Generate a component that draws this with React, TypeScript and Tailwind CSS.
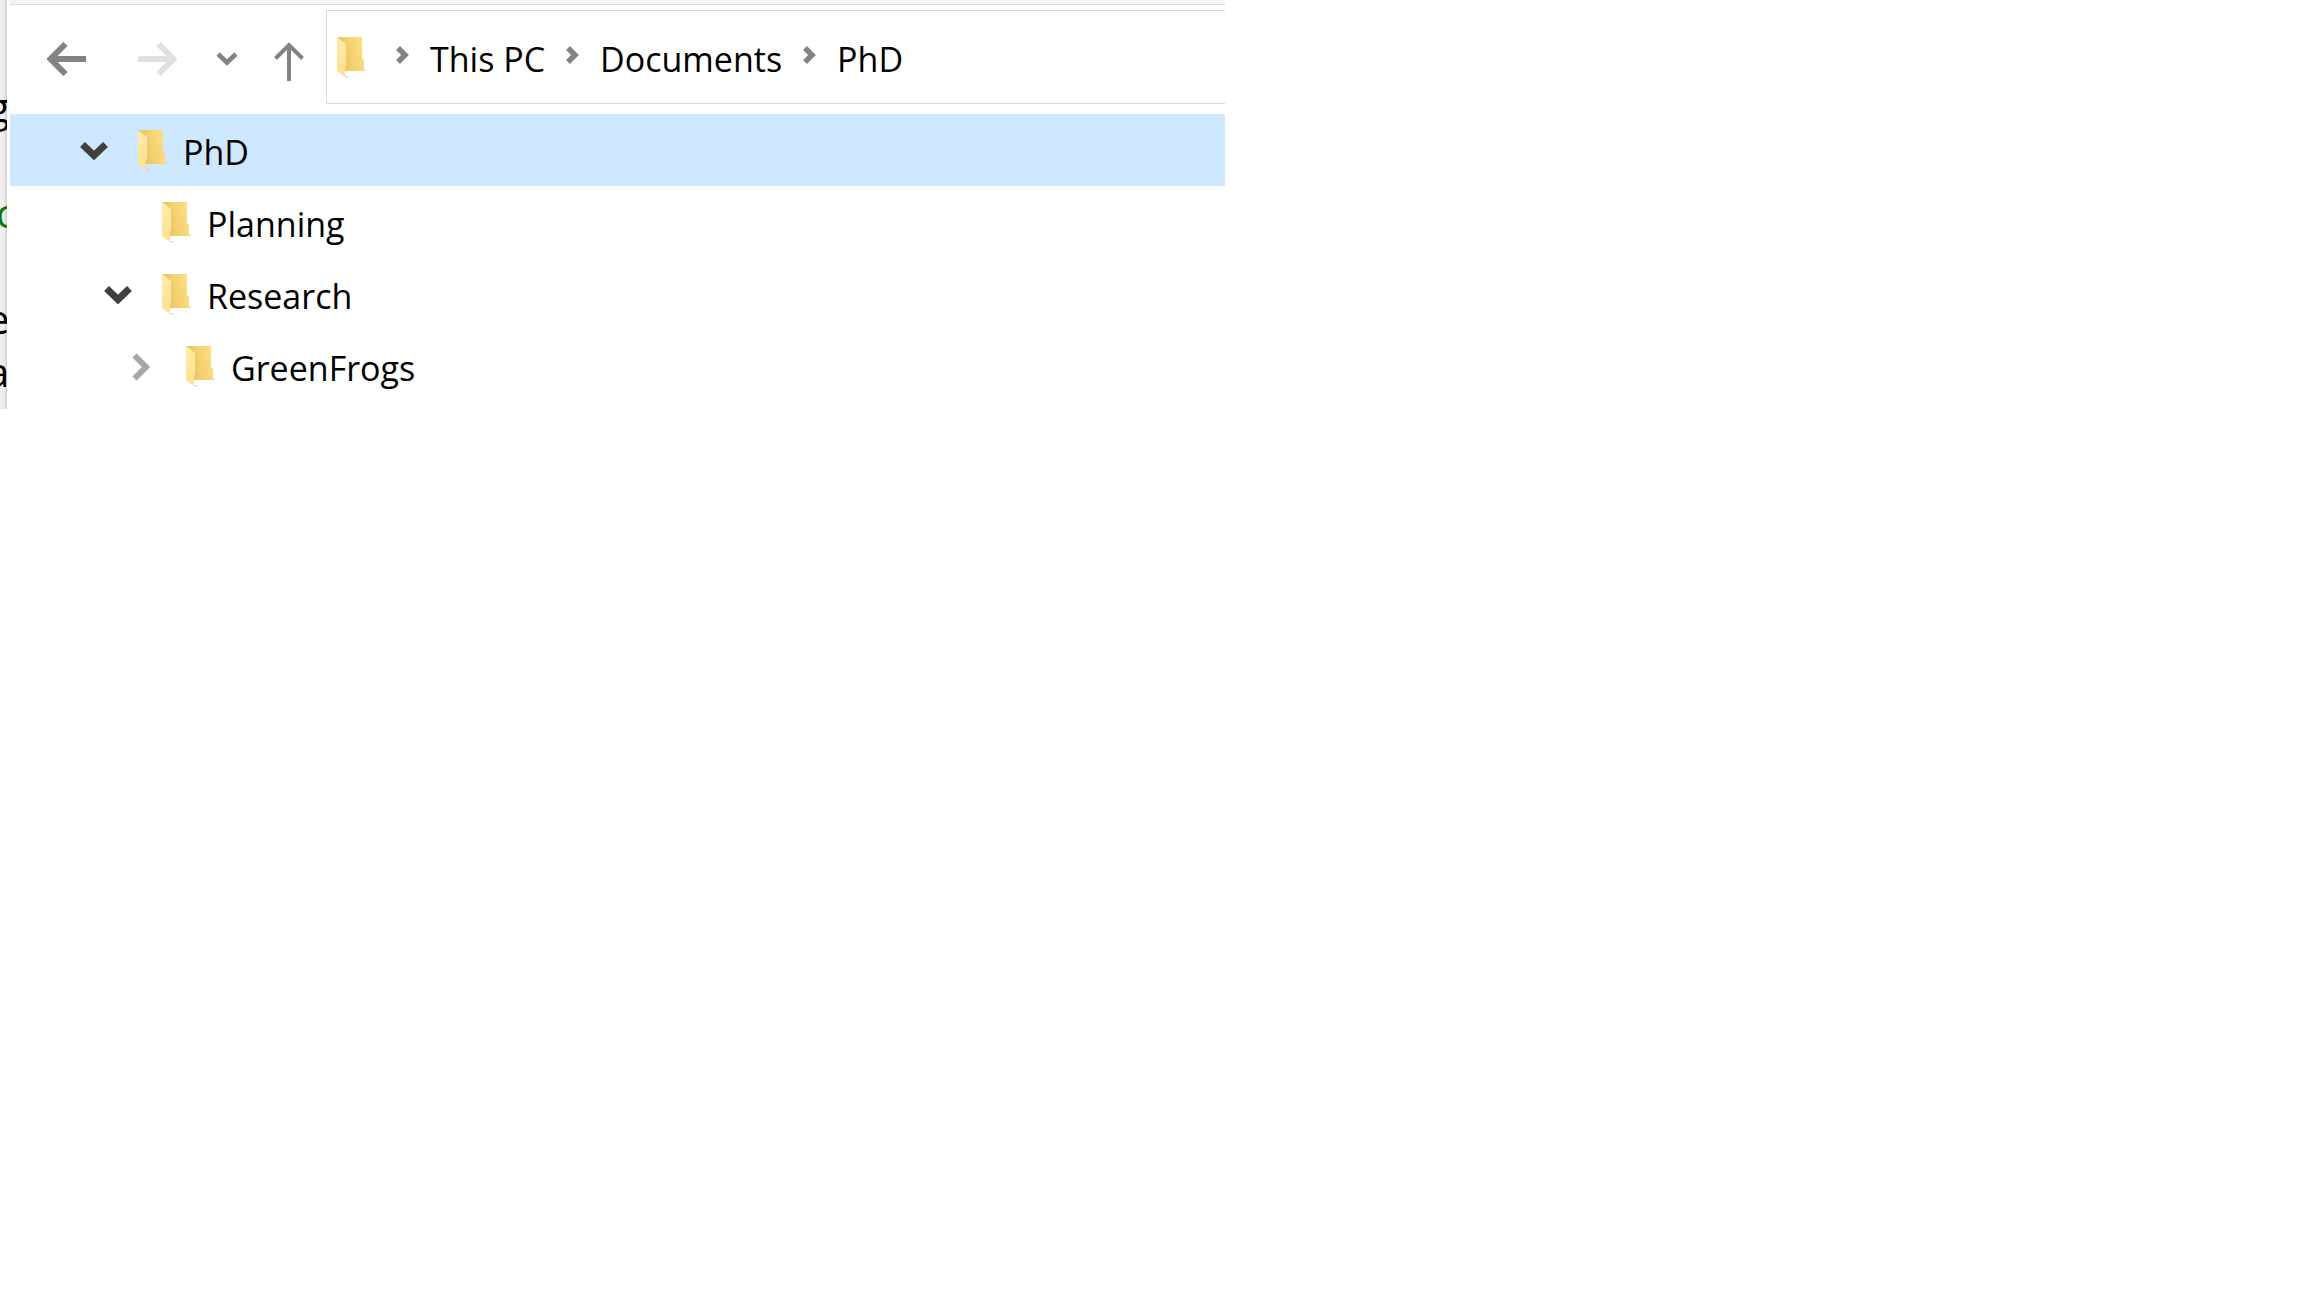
import type { ReactNode } from 'react';

function Folder({ id }: { id: string }) {
  return (
    <svg viewBox="0 0 30 42" className="h-[42px] w-[30px] shrink-0" aria-hidden="true">
      <defs>
        <linearGradient id={id + '-back'} x1="0" y1="0.6" x2="1" y2="0.3">
          <stop offset="0.2" stopColor="#ecc664" />
          <stop offset="1" stopColor="#fddf82" />
        </linearGradient>
        <linearGradient id={id + '-front'} x1="0" y1="0" x2="0" y2="1">
          <stop offset="0" stopColor="#ffebac" />
          <stop offset="1" stopColor="#ffe08a" />
        </linearGradient>
      </defs>
      <path d="M8 39 L12 39 L9 41 Z M27 33 L30 32 L27 35 Z" fill="#c9c9c9" fillOpacity="0.7" />
      <path d="M0 0 H25 V21 L27 23 V34 H6 Z" fill={`url(#${id}-back)`} />
      <path d="M0 0 L9 7 V29 L8 30 V40 L0 34 Z" fill={`url(#${id}-front)`} />
    </svg>
  );
}

function ChevronDown({ className, weight }: { className: string; weight: number }) {
  return (
    <svg viewBox="0 0 28 18" className={className} fill="none" stroke="currentColor" aria-hidden="true">
      <path d="M2.500 2.500 L14 13.500 L25.500 2.500" strokeWidth={weight} />
    </svg>
  );
}

function ChevronRight({ className }: { className: string }) {
  return (
    <svg viewBox="0 0 18 28" className={className} fill="none" stroke="currentColor" aria-hidden="true">
      <path d="M2.500 2.500 L14 14 L2.500 25.500" strokeWidth="6" />
    </svg>
  );
}

function Crumb({ href, children }: { href: string; children: ReactNode }) {
  return (
    <li className="flex items-center gap-[21px]">
      <svg viewBox="0 0 13 18" className="mb-1 h-[18px] w-[13px] shrink-0 text-[#838383]" fill="none" stroke="currentColor" aria-hidden="true">
        <path d="M2 2 L9 9 L2 16" strokeWidth="5.500" />
      </svg>
      <a href={href} className="pt-[3px]">{children}</a>
    </li>
  );
}

function NavButton({ label, disabled, className, children }: { label: string; disabled?: boolean; className?: string; children: ReactNode }) {
  return (
    <button type="button" aria-label={label} disabled={disabled} className={`text-[#838383] disabled:text-[#e0e0e0] ${className ?? ''}`}>
      {children}
    </button>
  );
}

function TreeRow({ name, indent, state, selected }: { name: string; indent: string; state: 'open' | 'closed' | 'none'; selected?: boolean }) {
  return (
    <li className={`flex h-[72px] items-center pt-[2px] ${indent} ${selected ? 'bg-[#cde8ff]' : ''}`}>
      <div className="flex w-[58px] shrink-0 items-center">
        {state === 'open' && (
          <button type="button" aria-label={`Collapse ${name}`} className="text-[#404040]">
            <ChevronDown className="h-[18px] w-[28px]" weight={7} />
          </button>
        )}
        {state === 'closed' && (
          <button type="button" aria-label={`Expand ${name}`} className="ml-1 text-[#a6a6a6]">
            <ChevronRight className="h-[28px] w-[18px]" />
          </button>
        )}
      </div>
      <Folder id={name} />
      <span className="ml-[15px] pt-[2px]">{name}</span>
    </li>
  );
}

export default function App() {
  return (
    <div className="min-h-screen bg-white font-['Open_Sans',sans-serif] text-[34px] leading-[48px] text-black">
      <div className="flex max-w-[1225px] overflow-hidden">
        <div className="flex w-[7px] shrink-0 flex-col items-start overflow-hidden bg-linear-to-r from-[#efefef] from-50% to-[#cfcfcf] pt-[80px] text-[40px] leading-[53px]">
          <span className="-ml-[12px]">g</span>
          <span className="mt-[53px] -ml-[4px] text-[#0a7a0a]">c</span>
          <span className="mt-[53px] -ml-[13px]">e</span>
          <span className="-ml-[13px]">a</span>
        </div>
        <div className="flex min-w-0 flex-1 flex-col pb-[7px] pl-[3px]">
          <div className="h-[5px] border-b border-[#d9dadc] bg-[#f3f4f7]" />
          <header className="flex items-center pt-[5px] pb-[10px]">
            <nav aria-label="History" className="flex w-[316px] shrink-0 items-center pt-1 pl-[37px]">
              <NavButton label="Back">
                <svg viewBox="0 0 39 34" className="h-[34px] w-[39px]" fill="none" stroke="currentColor" aria-hidden="true">
                  <path d="M39 17 H5" strokeWidth="6" />
                  <path d="M18.500 2 L3.500 17 L18.500 32" strokeWidth="6" />
                </svg>
              </NavButton>
              <NavButton label="Forward" disabled className="ml-[52px]">
                <svg viewBox="0 0 39 34" className="h-[34px] w-[39px]" fill="none" stroke="currentColor" aria-hidden="true">
                  <path d="M0 17 H34" strokeWidth="6" />
                  <path d="M20.500 2 L35.500 17 L20.500 32" strokeWidth="6" />
                </svg>
              </NavButton>
              <NavButton label="Recent locations" className="ml-[39px]">
                <ChevronDown className="h-[14px] w-[22px]" weight={6} />
              </NavButton>
              <NavButton label="Up" className="ml-9 pt-[5px]">
                <svg viewBox="0 0 30 39" className="h-[39px] w-[30px]" fill="none" stroke="currentColor" aria-hidden="true">
                  <path d="M15 39 V3" strokeWidth="4" />
                  <path d="M1.500 16.500 L15 3 L28.500 16.500" strokeWidth="4" />
                </svg>
              </NavButton>
            </nav>
            <nav aria-label="Address" className="h-[94px] min-w-0 flex-1 border border-r-0 border-[#d9d9d9]">
              <ol className="flex h-full items-center gap-[21px] pl-[10px]">
                <li className="mr-2 flex pt-px"><Folder id="address" /></li>
                <Crumb href="#this-pc">This PC</Crumb>
                <Crumb href="#documents">Documents</Crumb>
                <Crumb href="#phd">PhD</Crumb>
              </ol>
            </nav>
          </header>
          <ul>
            <TreeRow name="PhD" indent="pl-[70px]" state="open" selected />
            <TreeRow name="Planning" indent="pl-[94px]" state="none" />
            <TreeRow name="Research" indent="pl-[94px]" state="open" />
            <TreeRow name="GreenFrogs" indent="pl-[118px]" state="closed" />
          </ul>
        </div>
      </div>
    </div>
  );
}
